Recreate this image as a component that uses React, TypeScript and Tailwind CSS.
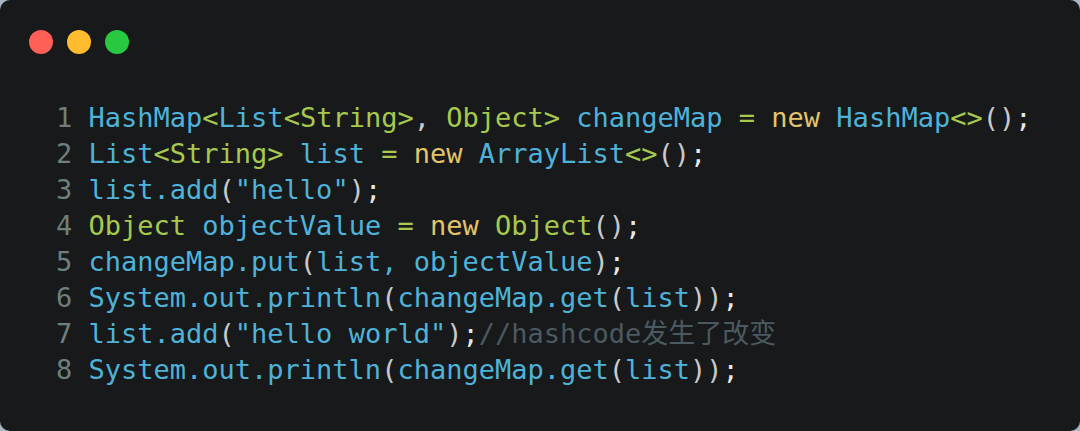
const C = {
  blue: "text-[#4fb3d9]",
  green: "text-[#a7c94d]",
  yellow: "text-[#e3c56b]",
  paren: "text-[#c9cacb]",
  semi: "text-[#e8e8e8]",
  comment: "text-[#4b5a60]",
};

type Tok = [string, string];

const lines: Tok[][] = [
  [
    ["HashMap", C.blue],
    ["<", C.green],
    ["List", C.blue],
    ["<String>", C.green],
    [",", C.paren],
    [" Object>", C.green],
    [" changeMap ", C.blue],
    ["=", C.green],
    [" ", C.blue],
    ["new", C.yellow],
    [" HashMap", C.blue],
    ["<>", C.green],
    ["()", C.paren],
    [";", C.semi],
  ],
  [
    ["List", C.blue],
    ["<String>", C.green],
    [" list ", C.blue],
    ["=", C.green],
    [" ", C.blue],
    ["new", C.yellow],
    [" ArrayList", C.blue],
    ["<>", C.green],
    ["()", C.paren],
    [";", C.semi],
  ],
  [
    ["list.add", C.blue],
    ["(", C.paren],
    ['"hello"', C.blue],
    [")", C.paren],
    [";", C.semi],
  ],
  [
    ["Object", C.green],
    [" objectValue ", C.blue],
    ["=", C.green],
    [" ", C.blue],
    ["new", C.yellow],
    [" Object", C.green],
    ["()", C.paren],
    [";", C.semi],
  ],
  [
    ["changeMap.put", C.blue],
    ["(", C.paren],
    ["list, objectValue", C.blue],
    [")", C.paren],
    [";", C.semi],
  ],
  [
    ["System.out.println", C.blue],
    ["(", C.paren],
    ["changeMap.get", C.blue],
    ["(", C.paren],
    ["list", C.blue],
    ["))", C.paren],
    [";", C.semi],
  ],
  [
    ["list.add", C.blue],
    ["(", C.paren],
    ['"hello world"', C.blue],
    [")", C.paren],
    [";", C.semi],
    ["//hashcode发生了改变", C.comment],
  ],
  [
    ["System.out.println", C.blue],
    ["(", C.paren],
    ["changeMap.get", C.blue],
    ["(", C.paren],
    ["list", C.blue],
    ["))", C.paren],
    [";", C.semi],
  ],
];

export default function App() {
  return (
    <div className="w-[1080px] h-[431px] bg-[#a9b5c1]">
      <div className="w-full h-full rounded-[10px] bg-[#18191b] pt-[30px] pl-[29px]">
        {/* window buttons */}
        <div className="flex gap-[14px]">
          <span className="w-6 h-6 rounded-full bg-[#fe5f57]" />
          <span className="w-6 h-6 rounded-full bg-[#febc2e]" />
          <span className="w-6 h-6 rounded-full bg-[#28c840]" />
        </div>

        <pre className="mt-[46px] ml-[27px] font-['DejaVu_Sans_Mono','Noto_Sans_CJK_SC',monospace] text-[27px] leading-[36px]">
          {lines.map((toks, i) => (
            <div key={i} className="whitespace-pre">
              <span className="text-[#6f7f7c]">{i + 1} </span>
              {toks.map(([t, cls], j) => (
                <span key={j} className={cls}>
                  {t}
                </span>
              ))}
            </div>
          ))}
        </pre>
      </div>
    </div>
  );
}
